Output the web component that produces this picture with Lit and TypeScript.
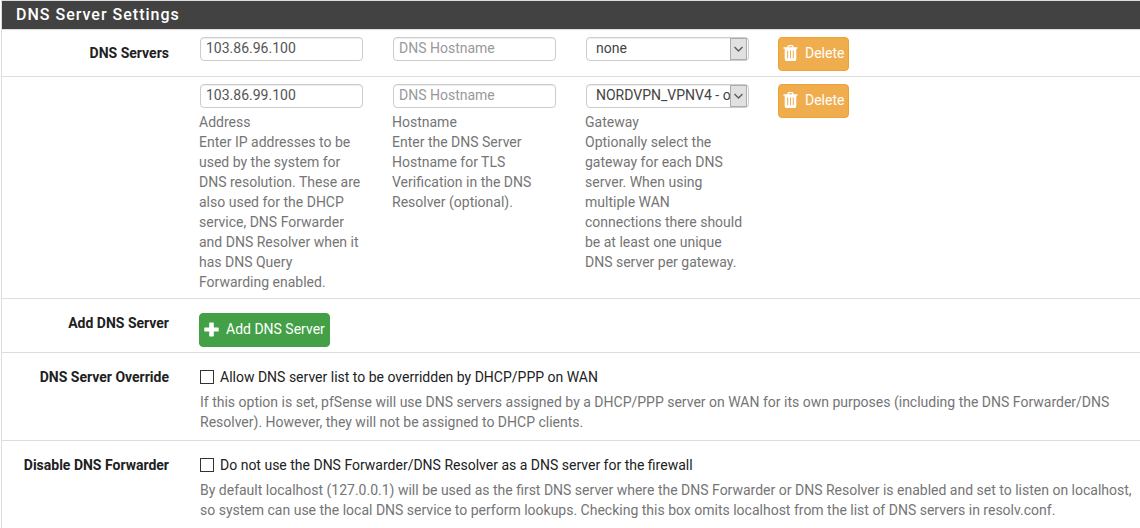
import { LitElement, html, css } from "lit";
import { customElement, property } from "lit/decorators.js";

interface DnsServer {
  address: string;
  gateway: string;
}

@customElement("app-root")
export class AppRoot extends LitElement {
  @property({ attribute: false }) servers: DnsServer[] = [
    { address: "103.86.96.100", gateway: "none" },
    { address: "103.86.99.100", gateway: "NORDVPN_VPNV4 - opt1" },
  ];

  static styles = css`
    :host {
      display: block;
      font: 14px/20px Roboto, sans-serif;
      color: #212121;
      background: #fff;
    }
    * {
      box-sizing: border-box;
    }
    .panel {
      border-top: 1px solid #ddd;
      border-left: 1px solid #ddd;
      margin-left: 1px;
    }
    .title {
      margin: 0;
      padding: 4px 14px;
      background: #424242;
      border-bottom: 1px solid #ddd;
      color: #fff;
      font-size: 16px;
      font-weight: 500;
      line-height: 20px;
      letter-spacing: 1px;
    }
    .row {
      display: grid;
      grid-template-columns: 183px 193fr 193fr 193fr 376fr;
      border-bottom: 1px solid #ddd;
      padding: 7px 0 5px;
    }
    .row > * {
      padding: 0 15px;
      min-width: 0;
    }
    .row > .name {
      padding: 6px 16px 0 0;
      font-weight: 700;
      text-align: right;
    }
    .row.add {
      padding-top: 14px;
    }
    .add > .name,
    .option > .name {
      padding-top: 0;
    }
    .row > .wide {
      grid-column: 2 / -1;
      padding-right: 6px;
    }
    .row.option {
      padding: 14px 0 8px;
    }
    .row:last-child {
      border-bottom: 0;
    }
    .row > .action {
      padding-left: 14px;
    }
    .control {
      display: block;
      width: 100%;
      height: 24px;
      margin: 0;
      padding: 0 5px 2px;
      border: 1px solid #ccc;
      border-radius: 4px;
      background: #fff;
      box-shadow: inset 0 1px 1px rgba(0, 0, 0, 0.075);
      color: #555;
      font: inherit;
    }
    .control::placeholder {
      color: #999;
      opacity: 1;
    }
    .select {
      position: relative;
    }
    .select select {
      appearance: none;
      padding: 0 18px 2px 9px;
      color: #444;
    }
    .arrow {
      position: absolute;
      top: 0;
      right: 1px;
      width: 18px;
      height: 24px;
      pointer-events: none;
    }
    .help {
      color: #757575;
    }
    .column-help {
      margin: 4px 0 1px -1px;
    }
    .btn {
      display: inline-flex;
      align-items: center;
      gap: 7px;
      height: 34px;
      padding: 0 4px 2px;
      border: 1px solid #43a047;
      border-radius: 4px;
      background: #43a047;
      color: #fff;
      font: inherit;
      vertical-align: top;
    }
    .add .btn {
      margin-left: -1px;
    }
    .delete {
      border-color: #eea236;
      background: #f0ad4e;
    }
    .check {
      display: flex;
      align-items: center;
      gap: 6px;
    }
    .check input {
      appearance: none;
      width: 14px;
      height: 14px;
      margin: 0;
      border: 1px solid #333;
      background: #fff;
    }
    .option .help {
      margin: 5px 0 0;
    }
  `;

  private help(title: string, text: string, last: boolean) {
    return last ? html`<div class="help column-help">${title}<br />${text}</div>` : "";
  }

  private serverRow(server: DnsServer, index: number) {
    const last = index === this.servers.length - 1;
    return html`<div class="row">
      <div class="name">${index === 0 ? "DNS Servers" : ""}</div>
      <div>
        <input class="control" type="text" aria-label="Address" .value=${server.address} />
        ${this.help(
          "Address",
          "Enter IP addresses to be used by the system for DNS resolution. These are also used for the DHCP service, DNS Forwarder and DNS Resolver when it has DNS Query Forwarding enabled.",
          last
        )}
      </div>
      <div>
        <input class="control" type="text" aria-label="Hostname" placeholder="DNS Hostname" />
        ${this.help(
          "Hostname",
          "Enter the DNS Server Hostname for TLS Verification in the DNS Resolver (optional).",
          last
        )}
      </div>
      <div>
        <div class="select">
          <select class="control" aria-label="Gateway">
            <option>${server.gateway}</option>
          </select>
          <svg class="arrow" viewBox="0 0 18 24" aria-hidden="true">
            <rect x="0.5" y="1.5" width="16" height="21" fill="#e1e1e1" stroke="#adadad" />
            <path d="M4.5 10l4 4 4-4" fill="none" stroke="#606060" stroke-width="1.5" />
          </svg>
        </div>
        ${this.help(
          "Gateway",
          "Optionally select the gateway for each DNS server. When using multiple WAN connections there should be at least one unique DNS server per gateway.",
          last
        )}
      </div>
      <div class="action">
        <button class="btn delete" type="button">
          <svg width="15" height="16" viewBox="0 0 15 16" fill="#fff" aria-hidden="true">
            <path
              fill-rule="evenodd"
              d="M.5 2.2h3.7L4.8.7Q5 0 5.8 0h3.4q.8 0 1 .7l.6 1.5h3.7v1.6h-1.2V14q0 2-1.6 2H3.3q-1.6 0-1.6-2V3.8H.5zM5.5 2.2h4l-.5-1H6zM4.2 5.4v7.8h1V5.4zM7 5.4v7.8h1V5.4zM9.8 5.4v7.8h1V5.4z"
            />
          </svg>
          Delete
        </button>
      </div>
    </div>`;
  }

  private optionRow(id: string, name: string, label: string, help: string) {
    return html`<div class="row option">
      <div class="name">${name}</div>
      <div class="wide">
        <label class="check" for=${id}><input id=${id} type="checkbox" />${label}</label>
        <p class="help">${help}</p>
      </div>
    </div>`;
  }

  render() {
    return html`<section class="panel">
      <h2 class="title">DNS Server Settings</h2>
      ${this.servers.map((server, index) => this.serverRow(server, index))}
      <div class="row add">
        <div class="name">Add DNS Server</div>
        <div class="wide">
          <button class="btn" type="button">
            <svg width="15" height="15" viewBox="0 0 15 15" fill="#fff" aria-hidden="true">
              <path
                d="M5.9.5h3.2q.7 0 .7.7v4.2H14q.7 0 .7.7v2.8q0 .7-.7.7H9.8v4.2q0 .7-.7.7H5.9q-.7 0-.7-.7V9.6H1q-.7 0-.7-.7V6.1q0-.7.7-.7h4.2V1.2q0-.7.7-.7z"
              />
            </svg>
            Add DNS Server
          </button>
        </div>
      </div>
      ${this.optionRow(
        "override",
        "DNS Server Override",
        "Allow DNS server list to be overridden by DHCP/PPP on WAN",
        "If this option is set, pfSense will use DNS servers assigned by a DHCP/PPP server on WAN for its own purposes (including the DNS Forwarder/DNS Resolver). However, they will not be assigned to DHCP clients."
      )}
      ${this.optionRow(
        "forwarder",
        "Disable DNS Forwarder",
        "Do not use the DNS Forwarder/DNS Resolver as a DNS server for the firewall",
        "By default localhost (127.0.0.1) will be used as the first DNS server where the DNS Forwarder or DNS Resolver is enabled and set to listen on localhost, so system can use the local DNS service to perform lookups. Checking this box omits localhost from the list of DNS servers in resolv.conf."
      )}
    </section>`;
  }
}
